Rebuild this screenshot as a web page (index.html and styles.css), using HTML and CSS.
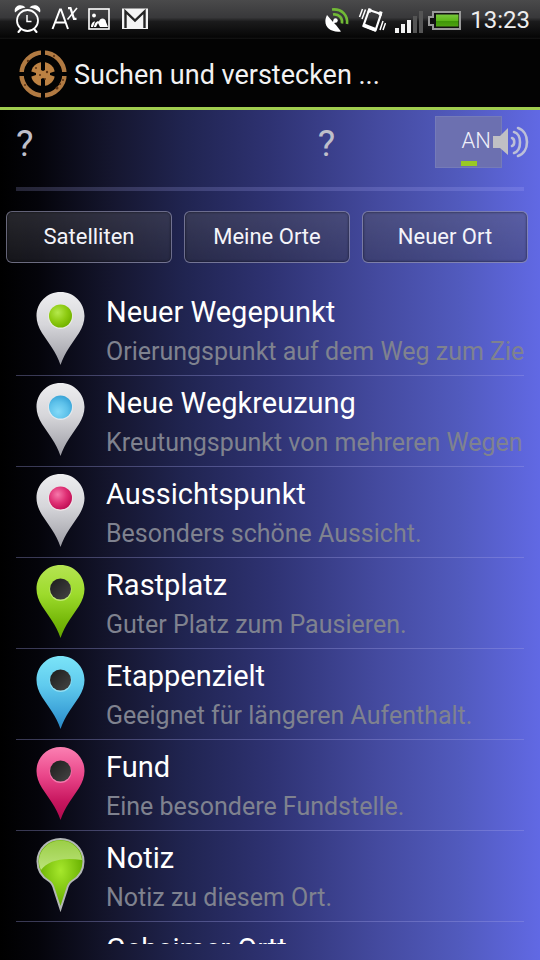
FILE: index.html
```
<!DOCTYPE html>
<html lang="de">
<head>
<meta charset="utf-8">
<meta name="viewport" content="width=device-width, initial-scale=1">
<title>Suchen und verstecken</title>
<link rel="stylesheet" href="styles.css">
</head>
<body>
<svg class="defs" aria-hidden="true">
  <defs>
    <linearGradient id="silver" x1="0" y1="0" x2="0" y2="1"><stop offset="0" stop-color="#eeeef0"/><stop offset=".45" stop-color="#d6d6da"/><stop offset="1" stop-color="#9b9ba3"/></linearGradient>
    <linearGradient id="green" x1="0" y1="0" x2="0" y2="1"><stop offset="0" stop-color="#b5e452"/><stop offset=".4" stop-color="#9ddb2c"/><stop offset=".75" stop-color="#78ba0b"/><stop offset="1" stop-color="#65a500"/></linearGradient>
    <linearGradient id="blue" x1="0" y1="0" x2="0" y2="1"><stop offset="0" stop-color="#7be4f8"/><stop offset=".4" stop-color="#60cbee"/><stop offset=".75" stop-color="#3fa5da"/><stop offset="1" stop-color="#2989c6"/></linearGradient>
    <linearGradient id="pink" x1="0" y1="0" x2="0" y2="1"><stop offset="0" stop-color="#fb80b2"/><stop offset=".4" stop-color="#e94589"/><stop offset=".75" stop-color="#c7165e"/><stop offset="1" stop-color="#b00a4d"/></linearGradient>
    <radialGradient id="dot-green" cx=".38" cy=".35" r=".65"><stop offset="0" stop-color="#b5e94d"/><stop offset=".6" stop-color="#8ecb12"/><stop offset="1" stop-color="#74b400"/></radialGradient>
    <radialGradient id="dot-blue" cx=".4" cy=".7" r=".7"><stop offset="0" stop-color="#83daf8"/><stop offset=".6" stop-color="#5dc1ea"/><stop offset="1" stop-color="#3ba5d8"/></radialGradient>
    <radialGradient id="dot-pink" cx=".38" cy=".35" r=".65"><stop offset="0" stop-color="#f679ab"/><stop offset=".6" stop-color="#de2e73"/><stop offset="1" stop-color="#c31258"/></radialGradient>
    <linearGradient id="hole" x1="0" y1="0" x2="1" y2="1"><stop offset="0" stop-color="#1c1c1c"/><stop offset="1" stop-color="#454545"/></linearGradient>
    <radialGradient id="note" cx=".5" cy=".45" r=".5"><stop offset="0" stop-color="#a6e72c"/><stop offset="1" stop-color="#68b000"/></radialGradient>
    <linearGradient id="gloss" x1="0" y1="0" x2="0" y2="1"><stop offset="0" stop-color="#9bce47"/><stop offset="1" stop-color="#bbe37a"/></linearGradient>
    <linearGradient id="cell" x1="0" y1="0" x2="0" y2="1"><stop offset="0" stop-color="#79c83c"/><stop offset=".5" stop-color="#5db71b"/><stop offset=".55" stop-color="#3e9608"/><stop offset="1" stop-color="#4fa312"/></linearGradient>
    <path id="pin" d="M24.500 1C11 1 .5 11.500 .5 25C.5 31 2.500 36 6 42L15.500 56C19.500 62 22.500 68 24.500 74C26.500 68 29.500 62 33.500 56L43 42C46.500 36 48.500 31 48.500 25C48.500 11.500 38 1 24.500 1Z"/>
  </defs>
</svg>

<div class="statusbar">
  <div class="status-left">
    <svg width="28" height="30" viewBox="0 0 28 30" fill="none" stroke="#fff" stroke-linecap="round">
      <circle cx="13.500" cy="17.500" r="10.500" stroke-width="1.800"/><path d="M13 12v6.500h4.500" stroke-width="1.500" stroke-linecap="butt"/><path d="M7 26l-2.500 3M20 26l2.500 3" stroke-width="2"/>
      <path d="M1 9.500C-1 3 7 0 11.500 4.500C7 5 4 7 1 9.500zM26 9.500C28 3 20 0 15.500 4.500C20 5 23 7 26 9.500z" fill="#fff" stroke="none"/>
    </svg>
    <svg width="28" height="30" viewBox="0 0 28 30" fill="none" stroke="#fff">
      <path d="M1.500 26L9 6.500h1L17 26M4.500 19.500h9.500" stroke-width="2"/><path d="M17 5.200h2.500l3.500 10.600h2.500" stroke-width="2.200"/><path d="M26 5l-9.500 11.500" stroke-width="1.600"/>
    </svg>
    <svg width="22" height="30" viewBox="0 0 22 30">
      <rect x="1" y="6" width="20" height="20" fill="none" stroke="#fff" stroke-width="1.600"/><circle cx="6" cy="12.500" r="1.900" fill="#fff"/><path d="M3 24c0-3.500 2-5.500 4-5.500l-2 5.500zM6 24c.5-4 3-6.500 5-5.500C12 14 18 15 18 19l2 5h-8l-2-4-2 4z" fill="#fff"/>
    </svg>
    <svg width="28" height="30" viewBox="0 0 28 30">
      <path d="M1 5.500h26v20.500H1z" fill="#f4f4f4"/><path d="M4.500 25V8.500L14 17.500L23.500 8.500V25" fill="none" stroke="#252525" stroke-width="2.400"/>
    </svg>
  </div>
  <div class="status-right">
    <svg width="26" height="30" viewBox="0 0 26 30" fill="none">
      <path d="M3 12C-2 22 5 30 17 28.500L12 22L9 19z" fill="#fff"/><path d="M8 21l3-3" stroke="#fff" stroke-width="2"/><circle cx="11.500" cy="17.500" r="2.200" fill="#fff"/>
      <g stroke="#71b936" stroke-width="2.600"><path d="M9 11.500c6-1 10 4 9 9"/><path d="M8 6.500c10-1 16 6 15 14.500"/></g>
    </svg>
    <svg width="28" height="30" viewBox="0 0 28 30" fill="none" stroke="#fff">
      <path d="M11 7l12 4-5.500 16.500-12-5z" stroke-width="2.200" stroke-linejoin="round"/><path d="M5 22l13 5" stroke-width="4"/><path d="M10 7l3 1M21 10l3 1" stroke-width="4"/>
      <path d="M7.500 6.500L4 16M4.500 6L1.500 14M22 27l3-9M25 27l2.500-7" stroke-width="1.500"/>
    </svg>
    <svg width="29" height="30" viewBox="0 0 29 30">
      <path d="M1 25h4v5H1zM7 21h4v9H7zM13 17h4v13h-4z" fill="#f2f2f2"/><path d="M19 13h4v17h-4zM25 8h4v22h-4z" fill="#555"/>
    </svg>
    <svg width="35" height="30" viewBox="0 0 35 30">
      <path d="M6 9h27v17H6v-4H2v-8h4z" fill="#111" stroke="#999" stroke-width="2"/><path d="M9 11.500h22.500v12H9z" fill="url(#cell)"/>
    </svg>
    <time class="clock">13:23</time>
  </div>
</div>

<header class="titlebar">
  <svg width="50" height="50" viewBox="0 0 50 50" fill="none">
    <circle cx="25" cy="25" r="21.500" stroke="#b17a42" stroke-width="4.500"/>
    <circle cx="25" cy="25" r="12" fill="#bd8243"/>
    <path d="M25 0v7M25 43v7M0 25h7M43 25h7" stroke="#030303" stroke-width="4"/>
    <path d="M23 12h4v9l-2 1-2-1zM23 38h4v-8l-2-1-2 1zM12 22l6 2v2l-6 2zM38 22l-6 2v2l6 2z" fill="#030303"/>
    <g fill="#5c3213"><circle cx="10" cy="12" r="1.200"/><circle cx="7" cy="36" r="1"/><circle cx="18" cy="19" r="1"/><circle cx="22" cy="26" r="1"/><circle cx="39" cy="39" r="1.500"/><circle cx="42" cy="35" r="1"/><circle cx="29" cy="23" r="1.200"/><circle cx="27" cy="30" r="1"/><circle cx="36" cy="7" r="1"/><circle cx="45" cy="31" r="1"/></g>
  </svg>
  <h1>Suchen und verstecken ...</h1>
</header>

<main>
  <section class="readings">
    <span>?</span>
    <span>?</span>
    <div class="sound">
      <button type="button" class="toggle" aria-pressed="true">AN</button>
      <svg class="speaker" width="37" height="32" viewBox="0 0 37 32" fill="none">
        <path d="M1 10h7l8-8v27l-8-7H1z" fill="#c0c0c4"/>
        <g stroke="#bcbfd8" stroke-width="2.600" stroke-linecap="round"><path d="M20 12c3 1 3 7 0 8"/><path d="M22 6c8 2 8 18 0 21"/><path d="M26 2c12 4 12 24 0 28"/></g>
      </svg>
    </div>
  </section>
  <div class="divider"></div>
  <nav class="actions">
    <button type="button">Satelliten</button>
    <button type="button">Meine Orte</button>
    <button type="button">Neuer Ort</button>
  </nav>
  <ul class="places">
    <li>
      <svg class="pin" viewBox="0 0 50 75"><use href="#pin" fill="url(#silver)"/><circle cx="24.500" cy="25.500" r="12.500" fill="#e7e9e3"/><circle cx="24.500" cy="25" r="11.500" fill="url(#dot-green)"/></svg>
      <div class="text"><h2>Neuer Wegepunkt</h2><p>Orierungspunkt auf dem Weg zum Ziel.</p></div>
    </li>
    <li>
      <svg class="pin" viewBox="0 0 50 75"><use href="#pin" fill="url(#silver)"/><circle cx="24.500" cy="25.500" r="12.500" fill="#e3e8ec"/><circle cx="24.500" cy="25" r="11.500" fill="url(#dot-blue)"/></svg>
      <div class="text"><h2>Neue Wegkreuzung</h2><p>Kreutungspunkt von mehreren Wegen.</p></div>
    </li>
    <li>
      <svg class="pin" viewBox="0 0 50 75"><use href="#pin" fill="url(#silver)"/><circle cx="24.500" cy="25.500" r="12.500" fill="#ece3e7"/><circle cx="24.500" cy="25" r="11.500" fill="url(#dot-pink)"/></svg>
      <div class="text"><h2>Aussichtspunkt</h2><p>Besonders schöne Aussicht.</p></div>
    </li>
    <li>
      <svg class="pin" viewBox="0 0 50 75"><use href="#pin" fill="url(#green)"/><circle cx="24.500" cy="26" r="11" fill="#c0ea72"/><circle cx="24.500" cy="25" r="10.500" fill="url(#hole)"/></svg>
      <div class="text"><h2>Rastplatz</h2><p>Guter Platz zum Pausieren.</p></div>
    </li>
    <li>
      <svg class="pin" viewBox="0 0 50 75"><use href="#pin" fill="url(#blue)"/><circle cx="24.500" cy="26" r="11" fill="#94e0f5"/><circle cx="24.500" cy="25" r="10.500" fill="url(#hole)"/></svg>
      <div class="text"><h2>Etappenzielt</h2><p>Geeignet für längeren Aufenthalt.</p></div>
    </li>
    <li>
      <svg class="pin" viewBox="0 0 50 75"><use href="#pin" fill="url(#pink)"/><circle cx="24.500" cy="26" r="11" fill="#f57aad"/><circle cx="24.500" cy="25" r="10.500" fill="url(#hole)"/></svg>
      <div class="text"><h2>Fund</h2><p>Eine besondere Fundstelle.</p></div>
    </li>
    <li>
      <svg class="pin" viewBox="0 0 50 75">
        <path d="M24.500 2C12 2 1.500 12 1.500 24.500C1.500 34 6 40 13 44C16 46 17 48 18 52L24.500 72L31 52C32 48 33 46 36 44C43 40 47.500 34 47.500 24.500C47.500 12 37 2 24.500 2Z" fill="url(#note)" stroke="#b3b7b5" stroke-width="2"/>
        <path d="M24.500 3.500C13 3.500 3 13 3 24.500C3 28 4 31 5 33C12 24 25 20 46 23C45 12 36 3.500 24.500 3.500Z" fill="url(#gloss)"/>
      </svg>
      <div class="text"><h2>Notiz</h2><p>Notiz zu diesem Ort.</p></div>
    </li>
    <li>
      <span class="pin"></span>
      <div class="text"><h2>Geheimer Ortt</h2></div>
    </li>
  </ul>
</main>
</body>
</html>
```
FILE: styles.css
```
* { box-sizing: border-box; }

body {
  margin: 0;
  height: 100vh;
  display: flex;
  flex-direction: column;
  overflow: hidden;
  background: #000;
  color: #fff;
  font-family: Roboto, "Liberation Sans", sans-serif;
}

h1, h2, p, ul { margin: 0; padding: 0; font-weight: 400; }
svg { display: block; flex: none; }
.defs { position: absolute; width: 0; height: 0; }

.statusbar {
  flex: none;
  height: 39px;
  padding: 0 10px 0 14px;
  display: flex;
  justify-content: space-between;
  background: linear-gradient(#4a4a4b, #38383a 45%, #1b1b1c 55%, #060606 95%, #141414);
}
.status-left, .status-right { display: flex; align-items: flex-start; padding-top: 3px; }
.status-left { gap: 9px; }
.status-right { gap: 8px; }
.status-right svg:nth-child(4) { margin-left: -4px; }
.status-left svg:nth-child(4) { margin-left: 2px; }
.clock { font-size: 24px; line-height: 34px; color: #eee; }

.titlebar {
  flex: none;
  height: 71px;
  padding: 2px 18px 0;
  display: flex;
  align-items: center;
  gap: 6px;
  border-bottom: 3px solid #a0cd4f;
  background: #030303;
}
h1 { padding-top: 2px; font-size: 27px; line-height: 36px; color: #f2f2f2; }

main {
  flex: 1;
  min-height: 0;
  display: flex;
  flex-direction: column;
  padding-bottom: 16px;
  background: linear-gradient(90deg, #000 0, #04040a 7%, #15162f 21%, #202450 34%, #2e3272 50%, #444a9f 70%, #515abd 85%, #6169e4 100%);
}

.readings {
  flex: none;
  height: 77px;
  padding: 6px 12px 0 16px;
  display: grid;
  grid-template-columns: 18fr 7fr 93px;
  align-items: start;
}
.readings span { font-size: 37px; line-height: 56px; color: #bfbfca; }
.sound { display: flex; align-items: center; }
.toggle {
  flex: none;
  width: 67px;
  height: 52px;
  padding: 4px 10px 0 0;
  display: flex;
  flex-direction: column;
  align-items: flex-end;
  border: 1px solid #757bb8;
  border-radius: 0;
  background: #6c70b0;
  color: #f0f0fa;
  font: 300 22px/40px Roboto, "Liberation Sans", sans-serif;
}
.toggle::after { content: ""; width: 16px; height: 5px; margin-right: 14px; background: #99c924; }
.speaker { margin-left: -10px; position: relative; }

.divider { flex: none; height: 4px; margin: 0 16px; background: rgba(180, 180, 255, .2); }

.actions {
  flex: none;
  display: grid;
  grid-template-columns: repeat(3, 1fr);
  gap: 12px;
  padding: 20px 12px 0 6px;
}
.actions button {
  height: 52px;
  padding: 0;
  border: 1px solid rgba(175, 175, 210, .5);
  border-radius: 6px;
  background: linear-gradient(rgba(85, 85, 95, .45), rgba(50, 50, 60, .42));
  box-shadow: inset 0 0 2px 1px rgba(0, 0, 0, .3);
  color: #f4f4fa;
  font: 22px/48px Roboto, "Liberation Sans", sans-serif;
}

.places {
  flex: 1;
  min-height: 0;
  margin: 22px 16px 0;
  overflow: hidden;
  list-style: none;
}
.places li {
  height: 91px;
  display: flex;
  gap: 20px;
  padding: 6px 0 0 20px;
  border-bottom: 1px solid rgba(160, 160, 230, .35);
}
.pin { flex: none; width: 50px; height: 75px; }
.text { flex: 1; min-width: 0; padding-top: 1px; }
.text h2, .text p { overflow: hidden; white-space: nowrap; line-height: 40px; }
.text h2 { font-size: 29px; }
.text p { font-size: 25px; color: #7f828f; }
```
